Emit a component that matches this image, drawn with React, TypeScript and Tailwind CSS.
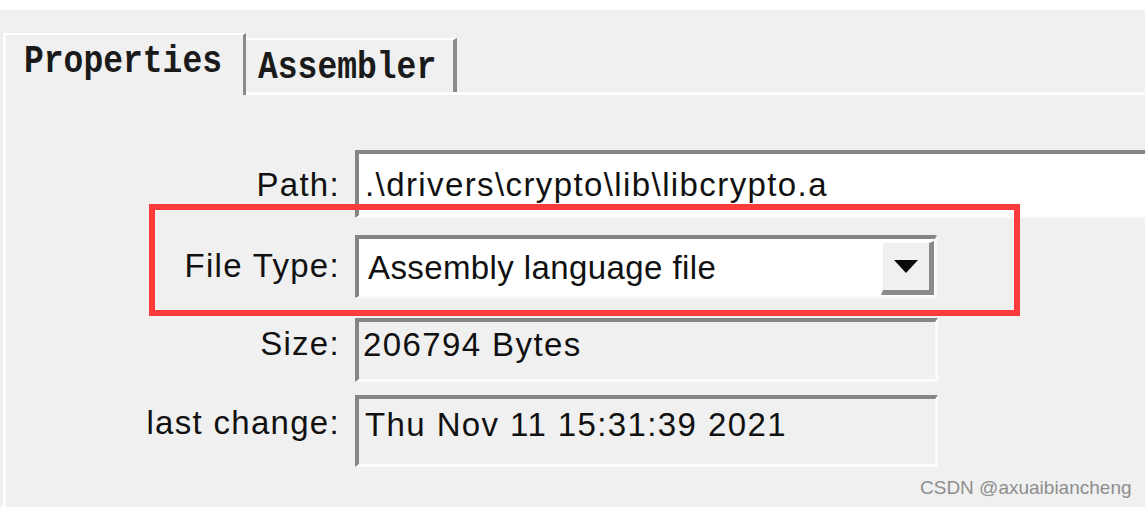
const labelFont = { fontFamily: '"Liberation Sans", Arial, sans-serif' };
const monoFont = { fontFamily: '"Liberation Mono", "Courier New", monospace' };

interface RowProps {
  label: string;
  height: string;
  labelPad: string;
  children: React.ReactNode;
}

function Row({ label, height, labelPad, children }: RowProps) {
  return (
    <div className={`flex ${height}`}>
      <div
        className={`w-[334px] shrink-0 text-right text-[33px] leading-[38px] tracking-[1.3px] text-[#111] ${labelPad}`}
        style={labelFont}
      >
        {label}
      </div>
      <div className="ml-[15px] flex-1 flex min-w-0">{children}</div>
    </div>
  );
}

function SunkenBox({
  className,
  children,
}: {
  className: string;
  children: React.ReactNode;
}) {
  return (
    <div
      className={`border-t-[4px] border-l-[4px] border-t-[#858585] border-l-[#858585] border-b-[3px] border-r-[3px] border-b-[#fbfbfb] border-r-[#fbfbfb] text-[33px] leading-[38px] tracking-[1.4px] text-[#111] whitespace-nowrap overflow-hidden ${className}`}
      style={labelFont}
    >
      {children}
    </div>
  );
}

export default function App() {
  return (
    <div className="relative w-[1145px] h-[507px] overflow-hidden bg-[#f0f0f0]">
      <div className="h-[10px] bg-white" />

      {/* tabs */}
      <div className="mt-[23px] pl-[3px] flex">
        <div
          className="h-[62px] w-[243px] shrink-0 border-t-[2px] border-l-[3px] border-t-white border-l-white border-r-[3px] border-r-[#8a8a8a] pl-[18px] pt-[8px] text-[33px] font-bold leading-[38px] text-[#1a1a1a]"
          style={monoFont}
        >
          <span className="inline-block scale-y-[1.2]">Properties</span>
        </div>
        <div className="flex-1 h-[62px] border-b-[3px] border-b-white pt-[5px]">
          <div
            className="h-[54px] w-[211px] border-t-[2px] border-t-white border-r-[4px] border-r-[#8a8a8a] pl-[12px] pt-[9px] text-[33px] font-bold leading-[38px] text-[#1a1a1a]"
            style={monoFont}
          >
            <span className="inline-block scale-y-[1.2]">Assembler</span>
          </div>
        </div>
      </div>

      {/* panel */}
      <div className="ml-[3px] h-[412px] border-l-[3px] border-l-white pt-[55px] flex flex-col">
        <Row label="Path:" height="h-[68px]" labelPad="pt-[16px]">
          <SunkenBox className="flex-1 -mr-[40px] bg-white pl-[6px] pt-[12px]">
            .\drivers\crypto\lib\libcrypto.a
          </SunkenBox>
        </Row>

        <div className="h-[17px]" />

        <Row label="File Type:" height="h-[63px]" labelPad="pt-[12px]">
          <div className="w-[582px] flex border-t-[4px] border-l-[4px] border-t-[#858585] border-l-[#858585] border-b-[2px] border-r-[2px] border-b-[#f8f8f8] border-r-[#f8f8f8] bg-white">
            <div
              className="flex-1 pl-[9px] pt-[10px] text-[33px] leading-[38px] tracking-[0.4px] text-[#111] whitespace-nowrap"
              style={labelFont}
            >
              Assembly language file
            </div>
            <div className="w-[53px] mt-[2px] mb-[1px] mr-[1px] flex items-center justify-center bg-[#f0f0f0] border-t-[2px] border-l-[2px] border-t-white border-l-white border-b-[5px] border-r-[5px] border-b-[#8a8a8a] border-r-[#8a8a8a]">
              <svg width="24" height="13" viewBox="0 0 24 13">
                <polygon points="0,0 24,0 12,13" fill="#0a0a0a" />
              </svg>
            </div>
          </div>
        </Row>

        <div className="h-[20px]" />

        <Row label="Size:" height="h-[64px]" labelPad="pt-[7px]">
          <SunkenBox className="w-[583px] bg-[#f0f0f0] pl-[4px] pt-[4px]">
            206794 Bytes
          </SunkenBox>
        </Row>

        <div className="h-[13px]" />

        <Row label="last change:" height="h-[72px]" labelPad="pt-[9px]">
          <SunkenBox className="w-[583px] bg-[#f0f0f0] pl-[6px] pt-[7px]">
            Thu Nov 11 15:31:39 2021
          </SunkenBox>
        </Row>
      </div>

      {/* annotation box */}
      <div className="absolute left-[149px] top-[204px] w-[871px] h-[112px] border-[6px] border-[#fb3a3a]" />

      {/* watermark */}
      <div
        className="absolute left-[920px] top-[476px] text-[19px] leading-[24px] text-[#8e8e8e] whitespace-nowrap"
        style={labelFont}
      >
        CSDN @axuaibiancheng
      </div>
    </div>
  );
}
